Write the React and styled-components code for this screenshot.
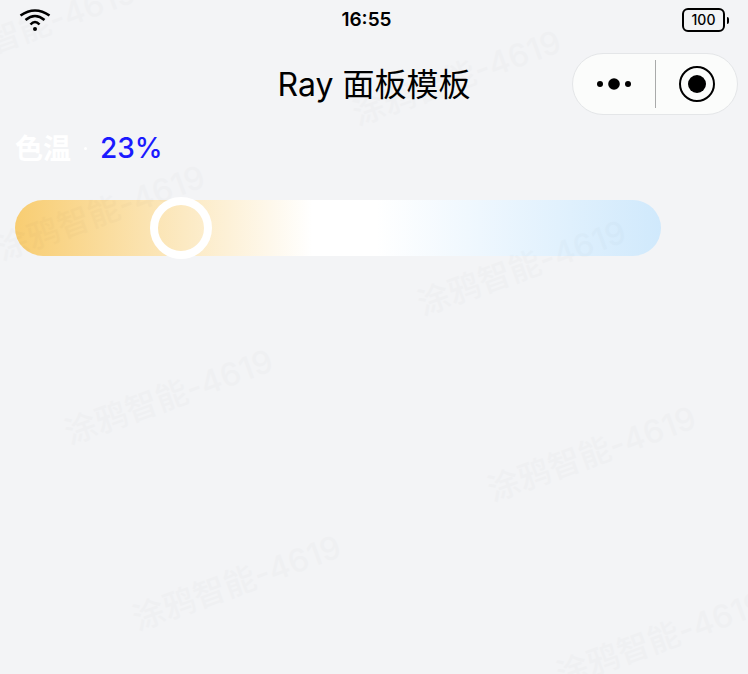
import React from 'react';
import styled, { createGlobalStyle } from 'styled-components';

const GlobalStyle = createGlobalStyle`
  html,
  body {
    margin: 0;
    padding: 0;
    background: #f3f4f6;
  }
`;

const fontStack = `Inter, "Noto Sans CJK SC", sans-serif`;

const Page = styled.div`
  position: relative;
  width: 748px;
  height: 674px;
  overflow: hidden;
  background: #f3f4f6;
  font-family: ${fontStack};
  color: #000;
`;

const StatusBar = styled.div`
  height: 40px;
  padding: 0 19px;
  display: flex;
  justify-content: space-between;
  align-items: center;
`;

const Clock = styled.div`
  font-size: 19px;
  font-weight: 600;
  line-height: 40px;
`;

const Battery = styled.div`
  display: flex;
  align-items: center;
  gap: 2px;
`;

const BatteryBody = styled.div`
  width: 43px;
  height: 24px;
  box-sizing: border-box;
  border: 2px solid #000;
  border-radius: 6px;
  font-size: 14px;
  font-weight: 500;
  line-height: 20px;
  text-align: center;
`;

const BatteryTip = styled.div`
  width: 2px;
  height: 7px;
  background: #000;
  border-radius: 0 2px 2px 0;
`;

const NavBar = styled.div`
  height: 62px;
  margin-top: 13px;
  padding: 0 10px;
  display: grid;
  grid-template-columns: 1fr auto 1fr;
  align-items: center;
`;

const Title = styled.h1`
  grid-column: 2;
  margin: -4px 0 0;
  font-size: 32px;
  font-weight: 400;
  white-space: nowrap;
`;

const Capsule = styled.div`
  justify-self: end;
  width: 166px;
  height: 62px;
  box-sizing: border-box;
  border: 1px solid #e4e6e8;
  border-radius: 31px;
  background: #fbfcfb;
  display: flex;
  align-items: center;
`;

const CapsuleButton = styled.div`
  flex: 0 0 82px;
  height: 100%;
  display: flex;
  align-items: center;
  justify-content: center;
`;

const CapsuleDivider = styled.div`
  flex: 0 0 1px;
  height: 48px;
  background: #a9aaaa;
`;

const Reading = styled.div`
  margin-top: 13px;
  padding-left: 15px;
  height: 40px;
  display: flex;
  align-items: center;
  font-weight: 500;
  font-size: 28px;
`;

const ReadingLabel = styled.span`
  margin-top: -3px;
  color: #fff;
  font-weight: 700;
`;

const ReadingDot = styled.span`
  width: 3px;
  height: 3px;
  margin: 0 13px 0 13px;
  border-radius: 50%;
  background: #fff;
`;

const ReadingValue = styled.span`
  color: #1a1aff;
`;

const Track = styled.div`
  position: relative;
  margin: 32px 0 0 15px;
  width: 646px;
  height: 56px;
  border-radius: 28px;
  background: linear-gradient(90deg, #f8cd72 0%, #ffffff 46%, #ffffff 56%, #d0e9fc 100%);
`;

const Thumb = styled.div`
  position: absolute;
  left: ${(p) => p.$left}px;
  top: -3px;
  width: 62px;
  height: 62px;
  box-sizing: border-box;
  border: 8px solid #fff;
  border-radius: 50%;
`;

const WatermarkText = styled.div`
  position: absolute;
  left: ${(p) => p.$x}px;
  top: ${(p) => p.$y}px;
  transform: translate(-50%, -50%) rotate(-20deg);
  font-size: 32px;
  font-weight: 500;
  letter-spacing: 0.2px;
  line-height: 40px;
  white-space: nowrap;
  color: #000;
  opacity: 0.012;
  pointer-events: none;
`;

const watermarks = [
  [32, 28],
  [457, 78],
  [101, 213],
  [522, 268],
  [169, 397],
  [592, 454],
  [237, 583],
  [661, 639],
];

function WifiIcon() {
  return (
    <svg width="32" height="22" viewBox="0 0 32 22" fill="none" stroke="#000" strokeWidth="2.6">
      <path d="M1.5 6.5 Q16 -3.5 30.5 6.5" />
      <path d="M6.5 11 Q16 3 25.5 11" />
      <path d="M11.5 15.5 Q16 10.5 20.5 15.5" />
      <circle cx="16" cy="20" r="2" fill="#000" stroke="none" />
    </svg>
  );
}

function MoreIcon() {
  return (
    <svg width="36" height="14" viewBox="0 0 36 14" fill="#000">
      <circle cx="4" cy="7" r="3" />
      <circle cx="18" cy="7" r="5.8" />
      <circle cx="32" cy="7" r="3" />
    </svg>
  );
}

function RecordIcon() {
  return (
    <svg width="38" height="38" viewBox="0 0 38 38">
      <circle cx="19" cy="19" r="17" fill="none" stroke="#000" strokeWidth="2" />
      <circle cx="19" cy="19" r="9" fill="#000" />
    </svg>
  );
}

export default function App() {
  return (
    <Page>
      <GlobalStyle />
      <StatusBar>
        <WifiIcon />
        <Clock>16:55</Clock>
        <Battery>
          <BatteryBody>100</BatteryBody>
          <BatteryTip />
        </Battery>
      </StatusBar>
      <NavBar>
        <Title>Ray 面板模板</Title>
        <Capsule>
          <CapsuleButton>
            <MoreIcon />
          </CapsuleButton>
          <CapsuleDivider />
          <CapsuleButton>
            <RecordIcon />
          </CapsuleButton>
        </Capsule>
      </NavBar>
      <Reading>
        <ReadingLabel>色温</ReadingLabel>
        <ReadingDot />
        <ReadingValue>23%</ReadingValue>
      </Reading>
      <Track>
        <Thumb $left={135} />
      </Track>
      {watermarks.map(([x, y]) => (
        <WatermarkText key={`${x}-${y}`} $x={x} $y={y}>
          涂鸦智能-4619
        </WatermarkText>
      ))}
    </Page>
  );
}
